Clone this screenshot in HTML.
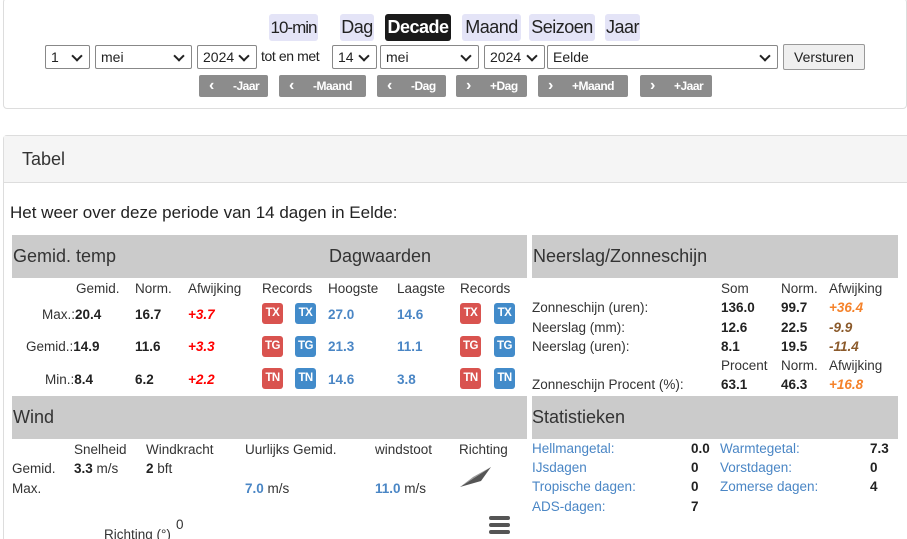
<!DOCTYPE html>
<html><head><meta charset="utf-8"><style>
*{box-sizing:border-box;margin:0;padding:0}
html,body{width:907px;height:539px;overflow:hidden}
body{background:#fff;font-family:"Liberation Sans",sans-serif;color:#333;position:relative}
.a{position:absolute;white-space:nowrap}
.nav{position:absolute;top:14px;height:27px;background:#e4e4f7;border-radius:3px;font-size:18px;line-height:27px;text-align:center;color:#222;letter-spacing:-0.5px;white-space:nowrap}
.sel{position:absolute;top:45px;height:24px;border:1px solid #888;border-radius:2px;background:#fff;font-size:14px;line-height:22px;padding-left:5px;color:#222}
.sel:after{content:"";position:absolute;right:8px;top:6px;width:6px;height:6px;border-right:2px solid #222;border-bottom:2px solid #222;transform:rotate(45deg)}
.gb{position:absolute;top:75px;height:22px;background:#8c8c8c;border-radius:2px;color:#fff;font-weight:bold;font-size:12px;line-height:22px;letter-spacing:-0.5px;white-space:nowrap}
.gb i{font-style:normal;font-size:16px;display:inline-block;width:24px}
.hd{position:absolute;background:#cbcbcb;font-size:18px;color:#333;padding-left:1px}
.s{font-size:13.5px}
.b{font-weight:bold;color:#222}
.bl{color:#4a86c5;font-weight:bold}
.r{color:#f00;font-weight:bold;font-style:italic}
.rec{position:absolute;width:21px;height:21px;border-radius:3px;color:#fff;font-weight:bold;font-size:11.5px;line-height:21px;text-align:center;letter-spacing:-0.5px}
.red{background:#d9534f}.blu{background:#428bca}
.lk{color:#4a86c5}
</style></head><body>
<div class="a" style="left:3px;top:-2px;width:904px;height:111px;border:1px solid #ddd;border-radius:4px"></div>
<div class="nav" style="left:269px;width:49px;font-size:17px;letter-spacing:-1px">10-min</div>
<div class="nav" style="left:340px;width:34px">Dag</div>
<div class="nav" style="left:385px;width:66px;background:#1a1a1a;color:#fff;font-weight:bold">Decade</div>
<div class="nav" style="left:462px;width:59px">Maand</div>
<div class="nav" style="left:529px;width:66px">Seizoen</div>
<div class="nav" style="left:605px;width:35px">Jaar</div>
<div class="sel" style="left:45px;width:45px">1</div>
<div class="sel" style="left:95px;width:97px">mei</div>
<div class="sel" style="left:197px;width:60px">2024</div>
<div class="a" style="left:261px;top:48px;font-size:14px;color:#222;letter-spacing:-0.4px">tot en met</div>
<div class="sel" style="left:332px;width:45px">14</div>
<div class="sel" style="left:380px;width:99px">mei</div>
<div class="sel" style="left:484px;width:61px">2024</div>
<div class="sel" style="left:547px;width:231px">Eelde</div>
<div class="a" style="left:783px;top:44px;width:82px;height:26px;border:1px solid #999;border-radius:2px;background:#efefef;font-size:14px;line-height:24px;text-align:center;color:#222">Versturen</div>
<div class="gb" style="left:199px;width:69px;padding-left:10px"><i>‹</i>-Jaar</div>
<div class="gb" style="left:279px;width:87px;padding-left:10px"><i>‹</i>-Maand</div>
<div class="gb" style="left:377px;width:69px;padding-left:10px"><i>‹</i>-Dag</div>
<div class="gb" style="left:456px;width:71px;padding-left:10px"><i>›</i>+Dag</div>
<div class="gb" style="left:538px;width:90px;padding-left:10px"><i>›</i>+Maand</div>
<div class="gb" style="left:640px;width:72px;padding-left:10px"><i>›</i>+Jaar</div>

<div class="a" style="left:3px;top:135px;width:904px;height:404px;border:1px solid #ddd;border-bottom:none;border-right:none;border-radius:4px 0 0 0"></div>
<div class="a" style="left:4px;top:136px;width:903px;height:47px;background:#f5f5f5;border-bottom:1px solid #ddd"></div>
<div class="a" style="left:22px;top:149px;font-size:18px;color:#333">Tabel</div>
<div class="a" style="left:10px;top:203px;font-size:17px;color:#222">Het weer over deze periode van 14 dagen in Eelde:</div>

<div class="hd" style="left:12px;top:235px;width:515px;height:43px"></div>
<div class="a" style="left:13px;top:246px;font-size:18px">Gemid. temp</div>
<div class="a" style="left:329px;top:246px;font-size:18px">Dagwaarden</div>
<div class="hd" style="left:532px;top:235px;width:366px;height:43px"></div>
<div class="a" style="left:533px;top:246px;font-size:18px">Neerslag/Zonneschijn</div>

<div class="s">
<div class="a" style="left:76px;top:281px">Gemid.</div>
<div class="a" style="left:135px;top:281px">Norm.</div>
<div class="a" style="left:188px;top:281px">Afwijking</div>
<div class="a" style="left:262px;top:281px">Records</div>
<div class="a" style="left:328px;top:281px">Hoogste</div>
<div class="a" style="left:397px;top:281px">Laagste</div>
<div class="a" style="left:460px;top:281px">Records</div>

<div class="a" style="left:42px;top:307px">Max.:<span class="b">20.4</span></div>
<div class="a b" style="left:135px;top:307px">16.7</div>
<div class="a r" style="left:188px;top:307px">+3.7</div>
<div class="a bl" style="left:328px;top:307px">27.0</div>
<div class="a bl" style="left:397px;top:307px">14.6</div>

<div class="a" style="left:26px;top:339px">Gemid.:<span class="b">14.9</span></div>
<div class="a b" style="left:135px;top:339px">11.6</div>
<div class="a r" style="left:188px;top:339px">+3.3</div>
<div class="a bl" style="left:328px;top:339px">21.3</div>
<div class="a bl" style="left:397px;top:339px">11.1</div>

<div class="a" style="left:45px;top:372px">Min.:<span class="b">8.4</span></div>
<div class="a b" style="left:135px;top:372px">6.2</div>
<div class="a r" style="left:188px;top:372px">+2.2</div>
<div class="a bl" style="left:328px;top:372px">14.6</div>
<div class="a bl" style="left:397px;top:372px">3.8</div>
</div>
<div class="rec red" style="left:262px;top:303px">TX</div><div class="rec blu" style="left:295px;top:303px">TX</div>
<div class="rec red" style="left:460px;top:303px">TX</div><div class="rec blu" style="left:494px;top:303px">TX</div>
<div class="rec red" style="left:262px;top:336px">TG</div><div class="rec blu" style="left:295px;top:336px">TG</div>
<div class="rec red" style="left:460px;top:336px">TG</div><div class="rec blu" style="left:494px;top:336px">TG</div>
<div class="rec red" style="left:262px;top:368px">TN</div><div class="rec blu" style="left:295px;top:368px">TN</div>
<div class="rec red" style="left:460px;top:368px">TN</div><div class="rec blu" style="left:494px;top:368px">TN</div>

<div class="s">
<div class="a" style="left:721px;top:281px">Som</div>
<div class="a" style="left:781px;top:281px">Norm.</div>
<div class="a" style="left:829px;top:281px">Afwijking</div>
<div class="a" style="left:532px;top:300px">Zonneschijn (uren):</div>
<div class="a b" style="left:721px;top:300px">136.0</div>
<div class="a b" style="left:781px;top:300px">99.7</div>
<div class="a" style="left:829px;top:300px;color:#f5822a;font-weight:bold;font-style:italic">+36.4</div>
<div class="a" style="left:532px;top:320px">Neerslag (mm):</div>
<div class="a b" style="left:721px;top:320px">12.6</div>
<div class="a b" style="left:781px;top:320px">22.5</div>
<div class="a" style="left:829px;top:320px;color:#8b5a2b;font-weight:bold;font-style:italic">-9.9</div>
<div class="a" style="left:532px;top:339px">Neerslag (uren):</div>
<div class="a b" style="left:721px;top:339px">8.1</div>
<div class="a b" style="left:781px;top:339px">19.5</div>
<div class="a" style="left:829px;top:339px;color:#8b5a2b;font-weight:bold;font-style:italic">-11.4</div>
<div class="a" style="left:721px;top:358px">Procent</div>
<div class="a" style="left:781px;top:358px">Norm.</div>
<div class="a" style="left:829px;top:358px">Afwijking</div>
<div class="a" style="left:532px;top:377px">Zonneschijn Procent (%):</div>
<div class="a b" style="left:721px;top:377px">63.1</div>
<div class="a b" style="left:781px;top:377px">46.3</div>
<div class="a" style="left:829px;top:377px;color:#f5822a;font-weight:bold;font-style:italic">+16.8</div>
</div>

<div class="hd" style="left:12px;top:396px;width:515px;height:43px"></div>
<div class="a" style="left:13px;top:407px;font-size:18px">Wind</div>
<div class="hd" style="left:532px;top:396px;width:366px;height:43px"></div>
<div class="a" style="left:532px;top:407px;font-size:18px">Statistieken</div>

<div class="s">
<div class="a" style="left:74px;top:442px">Snelheid</div>
<div class="a" style="left:146px;top:442px">Windkracht</div>
<div class="a" style="left:245px;top:442px">Uurlijks Gemid.</div>
<div class="a" style="left:375px;top:442px">windstoot</div>
<div class="a" style="left:459px;top:442px">Richting</div>
<div class="a" style="left:12px;top:461px">Gemid.</div>
<div class="a" style="left:74px;top:461px"><span class="b">3.3</span> m/s</div>
<div class="a" style="left:146px;top:461px"><span class="b">2</span> bft</div>
<div class="a" style="left:12px;top:481px">Max.</div>
<div class="a" style="left:245px;top:481px"><span class="bl">7.0</span> m/s</div>
<div class="a" style="left:375px;top:481px"><span class="bl">11.0</span> m/s</div>
<div class="a" style="left:176px;top:517px">0</div>
<div class="a" style="left:104px;top:527px;height:12px;overflow:hidden">Richting (°)</div>

<div class="a lk" style="left:532px;top:441px">Hellmangetal:</div><div class="a b" style="left:691px;top:441px">0.0</div>
<div class="a lk" style="left:720px;top:441px">Warmtegetal:</div><div class="a b" style="left:870px;top:441px">7.3</div>
<div class="a lk" style="left:532px;top:460px">IJsdagen</div><div class="a b" style="left:691px;top:460px">0</div>
<div class="a lk" style="left:720px;top:460px">Vorstdagen:</div><div class="a b" style="left:870px;top:460px">0</div>
<div class="a lk" style="left:532px;top:479px">Tropische dagen:</div><div class="a b" style="left:691px;top:479px">0</div>
<div class="a lk" style="left:720px;top:479px">Zomerse dagen:</div><div class="a b" style="left:870px;top:479px">4</div>
<div class="a lk" style="left:532px;top:499px">ADS-dagen:</div><div class="a b" style="left:691px;top:499px">7</div>
</div>
<svg class="a" style="left:459px;top:465px" width="34" height="24"><path d="M1 22 L32 2 L22 16 Z" fill="#555"/><path d="M1 22 L32 2 L14 12 Z" fill="#999"/></svg>
<svg class="a" style="left:489px;top:516px" width="22" height="18"><rect x="0" y="0" width="21" height="4" rx="2" fill="#555"/><rect x="0" y="7" width="21" height="4" rx="2" fill="#555"/><rect x="0" y="14" width="21" height="4" rx="2" fill="#555"/></svg>
</body></html>
